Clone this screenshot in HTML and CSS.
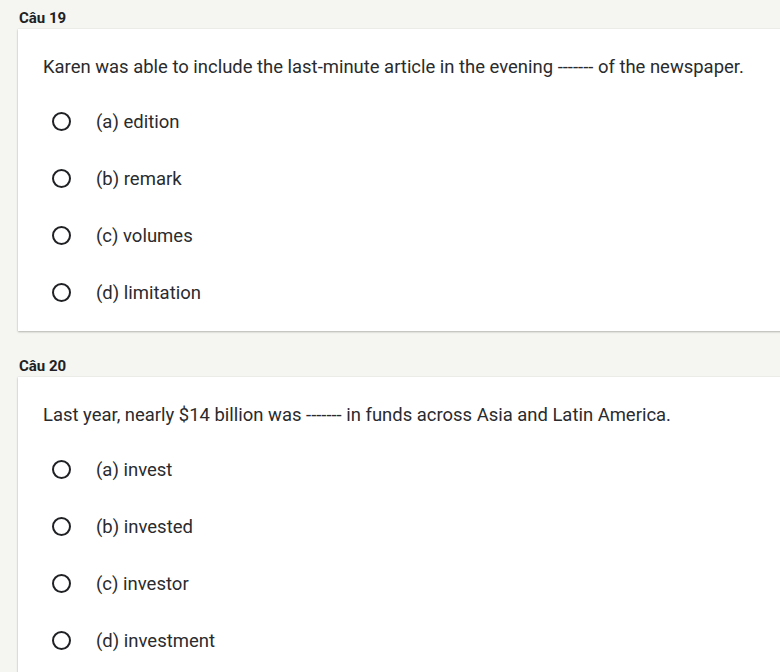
FILE: index.html
```html
<!DOCTYPE html>
<html lang="vi">
<head>
<meta charset="utf-8">
<title>Quiz</title>
<link rel="stylesheet" href="styles.css">
</head>
<body>
<div class="page">
  <section class="block">
    <h2 class="qnum">Câu 19</h2>
    <div class="card">
      <p class="question">Karen was able to include the last-minute article in the evening ------- of the newspaper.</p>
      <ul class="options">
        <li class="option"><span class="radio"></span><span class="label">(a) edition</span></li>
        <li class="option"><span class="radio"></span><span class="label">(b) remark</span></li>
        <li class="option"><span class="radio"></span><span class="label">(c) volumes</span></li>
        <li class="option"><span class="radio"></span><span class="label">(d) limitation</span></li>
      </ul>
    </div>
  </section>
  <section class="block">
    <h2 class="qnum">Câu 20</h2>
    <div class="card">
      <p class="question">Last year, nearly $14 billion was ------- in funds across Asia and Latin America.</p>
      <ul class="options">
        <li class="option"><span class="radio"></span><span class="label">(a) invest</span></li>
        <li class="option"><span class="radio"></span><span class="label">(b) invested</span></li>
        <li class="option"><span class="radio"></span><span class="label">(c) investor</span></li>
        <li class="option"><span class="radio"></span><span class="label">(d) investment</span></li>
      </ul>
    </div>
  </section>
</div>
</body>
</html>
```
FILE: styles.css
```css
html, body {
  margin: 0;
  padding: 0;
  background: #f5f5f1;
  overflow: hidden;
}
body {
  font-family: Roboto, "Liberation Sans", Arial, sans-serif;
  color: #202124;
}
.page {
  padding-left: 18px;
}
.block + .block {
  margin-top: 17px;
}
.qnum {
  margin: 0;
  padding: 8px 0 0 1px;
  font-size: 15px;
  line-height: 20px;
  font-weight: 700;
  color: #202124;
  margin-bottom: 1px;
}
.card {
  width: 820px;
  background: #fff;
  box-shadow: 0 1px 2px rgba(0,0,0,0.25), 0 0 1px rgba(0,0,0,0.15);
  padding: 26px 0 10px 25px;
  box-sizing: border-box;
}
.question {
  margin: 0 0 14px 0;
  font-size: 18.45px;
  line-height: 24px;
  color: #2a2b2e;
}
.options {
  list-style: none;
  margin: 0;
  padding: 0;
}
.option {
  display: flex;
  align-items: center;
  height: 57px;
}
.radio {
  width: 15px;
  height: 15px;
  border: 2px solid #202124;
  border-radius: 50%;
  margin-left: 9px;
  flex: none;
}
.label {
  margin-left: 25px;
  font-size: 18.5px;
  color: #2a2b2e;
}
```
